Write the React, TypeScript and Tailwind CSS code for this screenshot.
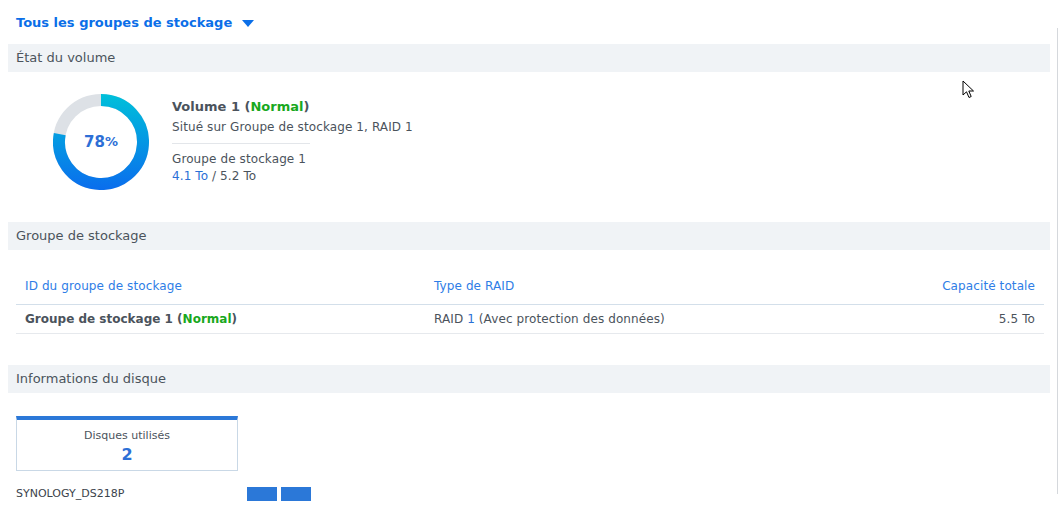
import React from 'react';

const font = { fontFamily: '"DejaVu Sans", Verdana, sans-serif' };

const SectionHeader: React.FC<{ title: string }> = ({ title }) => (
    <div className="mx-2 h-7 flex items-center bg-[#f0f3f6] px-2 text-[13px] text-[#4b535c]">{title}</div>
);

const Donut: React.FC<{ percent: number }> = ({ percent }) => {
    const r = 42;
    const angle = (percent / 100) * 2 * Math.PI;
    const endX = 48 + r * Math.sin(angle);
    const endY = 48 - r * Math.cos(angle);
    const largeArc = percent > 50 ? 1 : 0;
    return (
        <div className="relative w-[96px] h-[96px]">
            <svg width="96" height="96" viewBox="0 0 96 96">
                <defs>
                    <linearGradient id="donutGrad" x1="0" y1="0" x2="0" y2="96" gradientUnits="userSpaceOnUse">
                        <stop offset="0%" stopColor="#00c0da" />
                        <stop offset="100%" stopColor="#0a6ded" />
                    </linearGradient>
                </defs>
                <circle cx="48" cy="48" r={r} fill="none" stroke="#dde1e6" strokeWidth="12" />
                <path
                    d={`M48 ${48 - r} A${r} ${r} 0 ${largeArc} 1 ${endX} ${endY}`}
                    fill="none"
                    stroke="url(#donutGrad)"
                    strokeWidth="12"
                />
            </svg>
            <div className="absolute inset-0 flex items-center justify-center font-bold text-[#2d6fd6]">
                <span className="text-[15px]">78</span>
                <span className="text-[13px]">%</span>
            </div>
        </div>
    );
};

export default function App() {
    return (
        <div className="relative w-[1058px] h-[508px] bg-white overflow-hidden" style={font}>
            {/* scroll track line */}
            <div className="absolute right-0 top-[28px] h-[466px] w-px bg-[#d5d8dc]" />

            {/* mouse cursor */}
            <svg className="absolute left-[962px] top-[80px]" width="14" height="20" viewBox="0 0 14 20">
                <path d="M1 1 L1 15 L4.5 11.8 L7 17.5 L9.2 16.5 L6.8 11 L11.5 11 Z" fill="#fff" stroke="#000" strokeWidth="1" strokeLinejoin="miter" />
            </svg>

            {/* Title */}
            <div className="h-[44px] flex items-center pl-4 pt-[2px] gap-[10px]">
                <span className="text-[13px] font-bold text-[#0b6fe8]">Tous les groupes de stockage</span>
                <svg width="12" height="7" viewBox="0 0 12 7">
                    <path d="M0 0 L12 0 L6 7 Z" fill="#0b6fe8" />
                </svg>
            </div>

            <SectionHeader title="État du volume" />

            {/* Volume */}
            <div className="flex items-start pl-[53px] pt-[22px] h-[150px]">
                <Donut percent={78} />
                <div className="ml-[23px] mt-[5px] text-[12px] text-[#4b535c] tracking-[0.1px]">
                    <div className="font-bold text-[13px] leading-[16px] tracking-normal">
                        Volume 1 (<span className="text-[#18a81d]">Normal</span>)
                    </div>
                    <div className="mt-[4px] leading-[16px]">Situé sur Groupe de stockage 1, RAID 1</div>
                    <div className="mt-[8px] w-[138px] h-px bg-[#e3e6ea]" />
                    <div className="mt-[7px] leading-[16px]">Groupe de stockage 1</div>
                    <div className="mt-[1px] leading-[16px]">
                        <span className="text-[#2a70d6]">4.1 To</span> / 5.2 To
                    </div>
                </div>
            </div>

            <SectionHeader title="Groupe de stockage" />

            {/* Storage pool table */}
            <div className="ml-4 mr-[14px] mt-[22px] text-[12px] tracking-[0.1px]">
                <div className="flex items-start h-[33px] border-b border-[#d3dfea] text-[#2e7de6] px-[9px] pt-[6px] leading-[16px]">
                    <div className="w-[409px]">ID du groupe de stockage</div>
                    <div className="flex-1">Type de RAID</div>
                    <div className="text-right">Capacité totale</div>
                </div>
                <div className="flex items-center h-[29px] border-b border-[#e6e9ed] text-[#4b535c] px-[9px]">
                    <div className="w-[409px] font-bold tracking-normal">
                        Groupe de stockage 1 (<span className="text-[#18a81d]">Normal</span>)
                    </div>
                    <div className="flex-1">
                        RAID <span className="text-[#2a70d6]">1</span> (Avec protection des données)
                    </div>
                    <div className="text-right">5.5 To</div>
                </div>
            </div>

            <div className="h-[31px]" />
            <SectionHeader title="Informations du disque" />

            {/* Disk info */}
            <div className="pl-4 pt-[23px]">
                <div className="w-[222px] h-[55px] border border-[#c9d8e6] border-t-[4px] border-t-[#2b78d8] flex flex-col items-center pt-[9px]">
                    <div className="text-[11px] text-[#4b535c] leading-[14px]">Disques utilisés</div>
                    <div className="text-[16px] font-bold text-[#2d6fd6] leading-[20px] mt-[2px]">2</div>
                </div>
                <div className="flex items-center mt-[16px] h-[14px]">
                    <div className="w-[231px] text-[11px] text-[#3b434c]">SYNOLOGY_DS218P</div>
                    <div className="w-[30px] h-[14px] bg-[#2b78d8]" />
                    <div className="ml-[4px] w-[30px] h-[14px] bg-[#2b78d8]" />
                </div>
            </div>
        </div>
    );
}
